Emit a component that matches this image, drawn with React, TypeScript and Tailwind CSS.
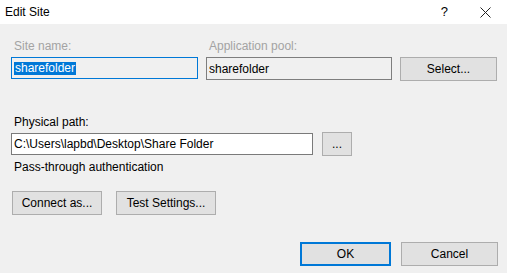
import React from 'react';

const font = { fontFamily: '"Liberation Sans", Arial, sans-serif' };

function Btn({ label, className = '', primary = false }: { label: string; className?: string; primary?: boolean }) {
  return (
    <button
      className={`h-[24px] bg-[#e1e1e1] text-[12px] text-black flex items-center justify-center ${
        primary ? 'border-2 border-[#0078d7]' : 'border border-[#adadad]'
      } ${className}`}
    >
      {label}
    </button>
  );
}

export default function App() {
  return (
    <div className="w-[507px] h-[273px] flex flex-col text-[12px] leading-[16px] text-black" style={font}>
      <div className="h-[24px] bg-white flex items-center pl-[5px]">
        <span className="text-[12px]">Edit Site</span>
        <span className="ml-auto mr-[32px] text-[13px]">?</span>
        <svg width="11" height="11" viewBox="0 0 11 11" className="mr-[16px]">
          <path d="M0.5 0.5 L10.5 10.5 M10.5 0.5 L0.5 10.5" stroke="#222" strokeWidth="1" />
        </svg>
      </div>

      <div className="flex-1 bg-[#f0f0f0] pl-[11px] pt-[14px]">
        <div className="grid grid-cols-[187px_186px_97px] gap-x-[8px]">
          <div className="pl-[3px] text-[#a3a3a3]">Site name:</div>
          <div className="pl-[3px] text-[#a3a3a3]">Application pool:</div>
          <div />
          <div className="mt-[3px] h-[22px] border border-[#0078d7] flex items-center pl-[2px]">
            <span className="bg-[#0078d7] text-white px-[1px] leading-[13px]">sharefolder</span>
          </div>
          <div className="mt-[3px] h-[23px] border border-[#7e7e7e] flex items-center pl-[2px]">sharefolder</div>
          <Btn label="Select..." className="mt-[3px] w-[97px]" />
        </div>

        <div className="mt-[33px] pl-[3px]">Physical path:</div>
        <div className="mt-[2px] flex items-center gap-[9px]">
          <div className="w-[302px] h-[22px] bg-white border border-[#7a7a7a] flex items-center pl-[2px]">
            C:\Users\lapbd\Desktop\Share Folder
          </div>
          <Btn label="..." className="w-[30px]" />
        </div>
        <div className="mt-[3px] pl-[3px]">Pass-through authentication</div>

        <div className="mt-[16px] flex gap-[14px] pl-[1px]">
          <Btn label="Connect as..." className="w-[90px]" />
          <Btn label="Test Settings..." className="w-[100px]" />
        </div>

        <div className="mt-[27px] flex justify-end gap-[10px] pr-[9px]">
          <Btn label="OK" primary className="w-[91px]" />
          <Btn label="Cancel" className="w-[97px]" />
        </div>
      </div>
    </div>
  );
}
